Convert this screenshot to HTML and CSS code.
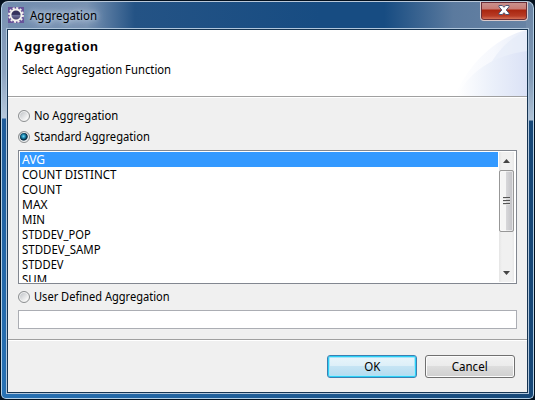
FILE: index.html
```html
<!DOCTYPE html>
<html lang="en">
<head>
<meta charset="utf-8">
<title>Aggregation</title>
<link rel="stylesheet" href="styles.css">
</head>
<body>
<div class="window">
  <div class="titlebar">
    <svg class="app-icon" width="16" height="16" viewBox="0 0 16 16">
      <defs><linearGradient id="lens" x2="0" y2="1"><stop offset="0" stop-color="#35305a"/><stop offset=".45" stop-color="#35345e"/><stop offset=".5" stop-color="#7377a0"/><stop offset="1" stop-color="#35315c"/></linearGradient></defs>
      <rect width="16" height="16" fill="#67539a"/>
      <circle cx="8" cy="8" r="7" fill="none" stroke="#f2f0ec" stroke-width="1.8" stroke-dasharray="2.1 1.565"/>
      <circle cx="8" cy="8" r="5.5" fill="url(#lens)" stroke="#f4f3f0" stroke-width="1.8"/>
    </svg>
    <h1 class="title"><span class="t1">Aggregation</span></h1>
    <button class="close" aria-label="Close">
      <svg width="12" height="10" viewBox="0 0 12 10"><path d="M1 .5h3.3L6 2.3 7.7.5H11v1.3L8.2 5 11 8.2v1.3H7.7L6 7.7 4.3 9.5H1V8.2L3.8 5 1 1.8z" fill="#fff" stroke="#4d5574" stroke-width="1"/></svg>
    </button>
  </div>
  <main class="dialog">
    <header class="header">
      <svg class="swoosh" width="75" height="66" viewBox="0 0 75 66">
        <defs>
          <linearGradient id="g1"><stop offset="0" stop-color="#fff"/><stop offset=".55" stop-color="#f6f8fd"/><stop offset="1" stop-color="#e8edf9"/></linearGradient>
          <linearGradient id="g2"><stop offset="0" stop-color="#fff"/><stop offset=".5" stop-color="#ebf0fa"/><stop offset="1" stop-color="#dbe2f6"/></linearGradient>
        </defs>
        <path d="M3 66C16 34 44 7 75 0v66z" fill="url(#g1)"/>
        <path d="M34 42C43 24 57 7 75 1v41z" fill="#e5ebf9" opacity=".6"/>
        <path d="M5 66C19 39 44 25 75 21v45z" fill="url(#g2)"/>
      </svg>
      <h2 class="heading"><span class="t2">Aggregation</span></h2>
      <p class="sub"><span class="t3">Select Aggregation Function</span></p>
    </header>
    <section class="body">
      <div class="option first"><i class="radio"></i><span class="t4">No Aggregation</span></div>
      <div class="option second"><i class="radio on"></i><span class="t5">Standard Aggregation</span></div>
      <div class="listbox">
        <ul class="items">
          <li class="selected"><span class="avg">AVG</span></li>
          <li><span class="distinct">COUNT DISTINCT</span></li>
          <li><span class="count">COUNT</span></li>
          <li><span class="max">MAX</span></li>
          <li><span class="min">MIN</span></li>
          <li><span class="pop">STDDEV_POP</span></li>
          <li><span class="samp">STDDEV_SAMP</span></li>
          <li><span class="stddev">STDDEV</span></li>
          <li><span class="sum">SUM</span></li>
        </ul>
        <div class="scrollbar">
          <div class="arrow"><svg width="7" height="4" viewBox="0 0 7 4"><path d="M0 4L3.5 0 7 4z" fill="#444"/></svg></div>
          <div class="thumb"><i></i><i></i><i></i></div>
          <div class="arrow down"><svg width="7" height="4" viewBox="0 0 7 4"><path d="M0 0L3.5 4 7 0z" fill="#444"/></svg></div>
        </div>
      </div>
      <div class="option third"><i class="radio"></i><span class="t6">User Defined Aggregation</span></div>
      <div class="field"></div>
    </section>
    <footer class="footer">
      <button class="btn primary"><span class="ok">OK</span></button>
      <button class="btn"><span class="cancel">Cancel</span></button>
    </footer>
  </main>
</div>
</body>
</html>
```
FILE: styles.css
```css
* { box-sizing: border-box; margin: 0; padding: 0; }
body { width: 535px; height: 400px; overflow: hidden; background: #03101e; font: 12px/15px "Noto Sans", "Open Sans", sans-serif; color: #000; }
button { font: inherit; color: inherit; }
span { display: inline-block; transform-origin: 0 50%; white-space: nowrap; }
.t1 { transform: scaleX(.957); }
.t2 { letter-spacing: .75px; }
.t3 { transform: scaleX(.94); }
.t4 { transform: scaleX(.94); }
.t5 { transform: scaleX(.93); }
.t6 { transform: scaleX(.923); }
.distinct, .count { transform: scaleX(.965); }
.pop, .stddev { transform: scaleX(.93); }
.min, .samp, .sum { transform: scaleX(.955); }
.ok, .cancel { transform: scaleX(.96); transform-origin: 50% 50%; }
.window { width: 533px; height: 398px; margin: 1px; border: 1px solid #b4d0e6; border-top-color: #b9c8d9; border-radius: 7px 7px 5px 5px; padding: 0 6px 4px 4px;
  background: linear-gradient(#7690b1 0, #8ca3c0 70px, #b5c8dc 116px, #205c9a 117px, #2872b5 100%) 0 0 / 6px 100% no-repeat, linear-gradient(#6983a3 0, #829bb7 75px, #b0c2d5 118px, #174878 119px, #174878 100%) 100% 0 / 7px 100% no-repeat, linear-gradient(90deg, #718cae 0, #7892b2 16%, #245385 25%, #174c82 60%, #174c82 72%, #5b7a9e 85%, #6984a5 100%) 0 0 / 100% 28px no-repeat, linear-gradient(90deg, #2872b5, #174878); }
.titlebar { height: 26px; display: flex; align-items: flex-start; padding-left: 2px; }
.app-icon { margin-top: 5px; }
.title { font-size: 12px; font-weight: 400; line-height: 17px; margin: 5px 0 0 6px; text-shadow: 0 0 7px #c5d3e3, 0 0 5px #b8c9dc, 0 0 11px #b8c9dc; }
.close { width: 48px; height: 19px; margin: 0 -1px 0 auto; border: 1px solid #d9c9ca; border-top: 0; border-radius: 0 0 4px 4px; background: linear-gradient(#c99491 0, #c87b74 7px, #a9250f 8px, #b83b25 14px, #df8268 18px); display: flex; justify-content: center; align-items: flex-start; padding-top: 3px; box-shadow: inset 0 0 0 1px #6d2e37; }
.dialog { width: 523px; height: 366px; border: 1px solid #b0c6dc; background: #f0f0f0; box-shadow: inset 0 0 0 1px #163451; display: flex; flex-direction: column; padding: 1px; }
.header { position: relative; height: 67px; background: #fff; border-bottom: 1px solid #a0a0a0; box-shadow: 0 1px #fff; padding: 8px 0 0 6px; }
.swoosh { position: absolute; right: 0; top: 0; }
.heading { position: relative; font: bold 13px/18px "Liberation Sans", sans-serif; }
.sub { position: relative; margin: 6px 0 0 8px; line-height: 16px; }
.body { height: 242px; padding: 12px 10px 0; }
.option { height: 14px; line-height: 14px; display: flex; align-items: center; gap: 4px; }
.option.second { margin-top: 7px; }
.option.third { margin-top: 6px; }
.radio { width: 12px; height: 12px; border: 1px solid #8c8f91; border-radius: 50%; background: linear-gradient(135deg, #b8bcc1, #f5f5f5 75%); box-shadow: inset 0 0 0 1px #f3f3f3; }
.radio.on { background: radial-gradient(circle at 45% 43%, #77d7f4 0, #1681a9 25%, #0b3048 43%, #18394e 49%, #dfe5e9 60%); }
.listbox { margin-top: 6px; height: 134px; width: 499px; border: 1px solid #828790; background: #fff; padding: 1px 2px 1px 1px; display: flex; overflow: hidden; }
.items { flex: 1; list-style: none; height: 130px; overflow: hidden; }
.items li { height: 15px; line-height: 15px; padding-left: 2px; }
.items .selected { background: #39f; color: #fff; }
.scrollbar { width: 15px; margin-left: 1px; background: linear-gradient(90deg, #e5e5e5, #f0f0f0 3px, #f0f0f0 13px, #e7e7e7); display: flex; flex-direction: column; }
.arrow { height: 18px; display: flex; align-items: center; justify-content: center; }
.arrow.down { margin-top: auto; }
.thumb { width: 15px; height: 62px; border: 1px solid #979797; border-radius: 2px; background: linear-gradient(90deg, #f5f5f5 45%, #d6d6d9 50%, #c1c1c5); box-shadow: inset 0 0 0 1px #fafafa99; display: flex; flex-direction: column; justify-content: center; align-items: center; gap: 1px; }
.thumb i { width: 7px; height: 2px; background: #555; border-bottom: 1px solid #ddd; }
.field { margin-top: 6px; width: 499px; height: 19px; border: 1px solid #abadb3; background: #fff; }
.footer { flex: 1; border-top: 1px solid #a0a0a0; box-shadow: inset 0 1px #fff; display: flex; justify-content: flex-end; gap: 8px; padding: 15px 12px 0 0; }
.btn { width: 90px; height: 23px; border: 1px solid #707070; border-radius: 3px; background: linear-gradient(#f2f2f2 0, #ebebeb 48%, #ddd 50%, #cfcfcf); box-shadow: inset 0 0 0 1px #fcfcfc; display: flex; align-items: center; justify-content: center; }
.btn.primary { border-color: #3c7fb1; background: linear-gradient(#eaf5fb 0, #dceff8 48%, #c5e4f4 50%, #b2dbef); box-shadow: inset 0 0 0 1px #2bd1f7, inset 0 0 0 2px #a8e4f8; }
```
